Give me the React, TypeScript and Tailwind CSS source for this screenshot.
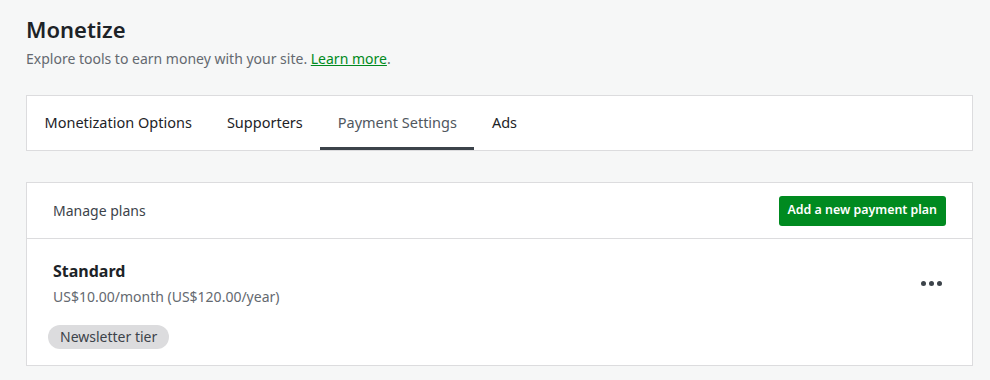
import React, { useState } from "react";

const tabs = ["Monetization Options", "Supporters", "Payment Settings", "Ads"];

const App = () => {
  const [active, setActive] = useState(2);

  return (
    <div
      className="min-h-screen w-full bg-[#f6f7f7] pt-[16px] pl-[26px] pr-[17px] text-[#1e1e1e]"
      style={{ fontFamily: '"Noto Sans", "Open Sans", sans-serif' }}
    >
      <h1 className="text-[22px] font-semibold leading-[26px] text-[#1d2327]">Monetize</h1>
      <p className="mt-[7px] text-[14px] leading-5 text-[#646970]">
        Explore tools to earn money with your site.{" "}
        <a href="#" className="text-[#008a20] underline">
          Learn more
        </a>
        .
      </p>

      <div className="mt-[26px] flex h-[56px] border border-[#dcdcde] bg-white">
        {tabs.map((tab, i) => (
          <button
            key={tab}
            onClick={() => setActive(i)}
            className={`flex h-full items-center px-[17.5px] text-[14.5px] ${
              active === i
                ? "border-b-[3px] border-[#3c434a] pt-[3px] text-[#50575e]"
                : "text-[#1d2327]"
            }`}
          >
            {tab}
          </button>
        ))}
      </div>

      <div className="mt-[31px] border border-[#dcdcde] bg-white">
        <div className="flex h-[56px] items-center justify-between border-b border-[#dcdcde] pl-[26px] pr-[26px]">
          <span className="text-[14px] text-[#3c434a]">Manage plans</span>
          <button className="h-[30px] rounded-[3px] bg-[#008a20] px-[9px] text-[12.4px] font-semibold text-white">
            Add a new payment plan
          </button>
        </div>
        <div className="flex items-start justify-between pt-[20px] pb-[16px] pl-[21px] pr-[30px]">
          <div>
            <div className="pl-[5px] text-[16px] font-bold leading-6 text-[#1d2327]">Standard</div>
            <div className="mt-[3px] pl-[5px] text-[14px] text-[#646970]">
              US$10.00/month (US$120.00/year)
            </div>
            <span className="mt-[18px] inline-block rounded-full bg-[#dcdcde] px-3 py-[2px] text-[14px] leading-5 text-[#3c434a]">
              Newsletter tier
            </span>
          </div>
          <button className="mt-[22px] flex gap-[3px]" aria-label="More">
            <span className="h-[5px] w-[5px] rounded-full bg-[#3c434a]" />
            <span className="h-[5px] w-[5px] rounded-full bg-[#3c434a]" />
            <span className="h-[5px] w-[5px] rounded-full bg-[#3c434a]" />
          </button>
        </div>
      </div>
    </div>
  );
};

export default App;
